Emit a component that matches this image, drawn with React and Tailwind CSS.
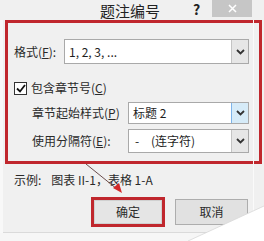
import React from 'react';

const font = { fontFamily: '"Noto Sans CJK SC", "Noto Sans", sans-serif' };

function Chevron() {
  return (
    <svg width="9" height="6" viewBox="0 0 9 6">
      <path d="M1 1 L4.5 4.5 L8 1" fill="none" stroke="#333" strokeWidth="1.8" />
    </svg>
  );
}

function Select({ children, focused, className }) {
  return (
    <div className={`flex bg-white border border-[#a9a9a9] ${className}`}>
      <div className="flex-1 flex items-center pl-[4px] text-[12px] text-[#1e1e1e]">{children}</div>
      <div
        className={`w-[17px] flex items-center justify-center border-l ${
          focused ? 'bg-[#d6ebf8] border-[#7eb4ea]' : 'bg-[#e6e6e6] border-[#c4c4c4]'
        }`}
      >
        <Chevron />
      </div>
    </div>
  );
}

export default function App() {
  return (
    <div className="relative w-[264px] h-[241px] overflow-hidden bg-[#f0f0f0] text-[12px] text-[#2a2a2a]" style={font}>
      <div className="absolute left-0 top-[20px] bottom-0 w-[3px] bg-[#f8f8f8]" />

      {/* title bar */}
      <div className="flex h-[20px] items-start">
        <div className="w-[100px]" />
        <div className="pt-[2px] text-[15px] leading-[18px] text-[#222]">题注编号</div>
        <div className="flex-1" />
        <div className="w-[12px] pt-[1px] text-[14px] font-bold leading-[16px] text-[#222]">?</div>
        <div className="w-[7px]" />
        <div className="w-[40px] h-[17px] bg-[#c6c6c6] flex items-center justify-center">
          <svg width="9" height="9" viewBox="0 0 9 9">
            <path d="M1 1 L8 8 M8 1 L1 8" stroke="#fff" strokeWidth="1.5" />
          </svg>
        </div>
        <div className="w-[12px]" />
      </div>

      {/* red framed group */}
      <div className="ml-[5px] w-[257px] h-[144px] border-[3px] border-[#c0272d] flex flex-col">
        <div className="mt-[16px] h-[25px] flex items-center">
          <div className="w-[56px] pl-[6px]">
            格式(<span className="underline">F</span>):
          </div>
          <Select className="w-[185px] h-[25px]">1, 2, 3, ...</Select>
        </div>

        <div className="mt-[16px] h-[16px] flex items-center pl-[6px]">
          <div className="w-[13px] h-[13px] bg-white border border-[#333] flex items-center justify-center">
            <svg width="10" height="9" viewBox="0 0 10 9">
              <path d="M1 4.5 L4 7.5 L9 1" fill="none" stroke="#111" strokeWidth="1.8" />
            </svg>
          </div>
          <div className="ml-[4px]">
            包含章节号(<span className="underline">C</span>)
          </div>
        </div>

        <div className="mt-[6px] h-[22px] flex items-center">
          <div className="w-[120px] pl-[24px]">
            章节起始样式(<span className="underline">P</span>)
          </div>
          <Select focused className="w-[121px] h-[22px]">标题 2</Select>
        </div>

        <div className="mt-[5px] h-[24px] flex items-center">
          <div className="w-[120px] pl-[24px]">
            使用分隔符(<span className="underline">E</span>):
          </div>
          <Select className="w-[121px] h-[24px]">
            <span className="w-[18px] pl-[2px]">-</span>
            <span>(连字符)</span>
          </Select>
        </div>
      </div>

      {/* example */}
      <div className="mt-[9px] h-[14px] flex items-center pl-[14px] leading-[14px]">
        <span>示例:</span>
        <span className="ml-[10px]">图表 II-1，表格 1-A</span>
      </div>

      {/* buttons */}
      <div className="mt-[10px] flex items-center">
        <div className="ml-[91px] w-[74px] h-[30px] border-[3px] border-[#c0272d] flex">
          <div className="flex-1 flex items-center justify-center bg-[#e5e5e5] border border-[#d0d0d0]">确定</div>
        </div>
        <div className="ml-[10px] w-[73px] h-[26px] flex items-center justify-center bg-[#e1e1e1] border border-[#adadad]">
          取消
        </div>
      </div>

      <div className="absolute left-[3px] right-[11px] top-[232px] h-px bg-[#dadada]" />
      <div className="absolute left-0 right-0 top-[233px] bottom-0 bg-[#f6f6f6]" />
      <div className="absolute top-[20px] left-[253px] h-[213px] w-px bg-[#fafafa]" />

      {/* annotation arrow and page curl */}
      <svg className="absolute inset-0 pointer-events-none" width="264" height="241" viewBox="0 0 264 241">
        <line x1="86" y1="164" x2="117" y2="189" stroke="#5a3a3a" strokeWidth="0.9" />
        <polygon points="122,193 113,188 119,183" fill="#d42a2a" />
        <polygon points="264,206 264,241 188,241" fill="#ffffff" />
        <line x1="264" y1="206" x2="188" y2="241" stroke="#d8d8d8" strokeWidth="0.8" />
      </svg>
    </div>
  );
}
